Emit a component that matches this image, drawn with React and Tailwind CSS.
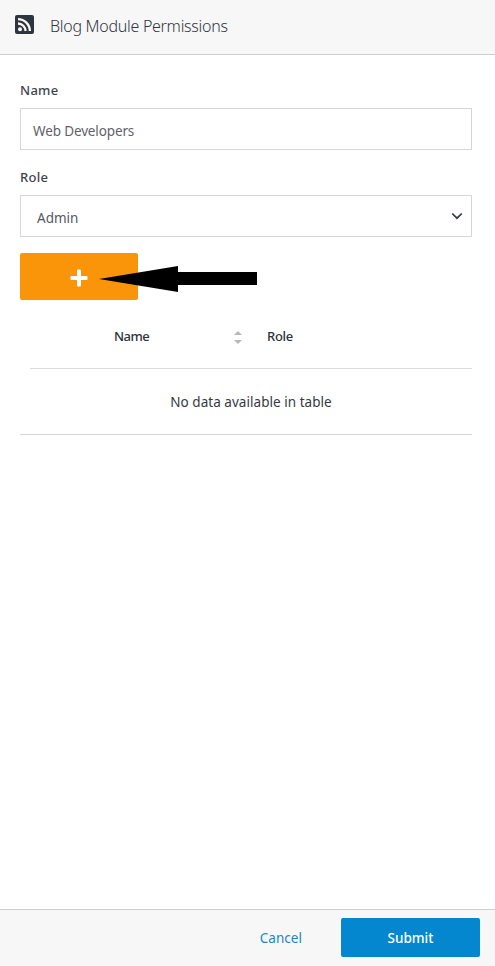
function RssIcon() {
  return (
    <svg className="-mt-1.5 size-[19px]" viewBox="0 0 19 19" fill="none">
      <rect width="19" height="19" rx="2" fill="#2f353f" />
      <circle cx="5" cy="14.2" r="2" fill="#f7f7f7" />
      <path d="M3 8.5a7.5 7.5 0 0 1 7.5 7.5M3 4.1A12 12 0 0 1 14.9 16" stroke="#f7f7f7" strokeWidth="2.3" />
    </svg>
  );
}

function Header() {
  return (
    <header className="flex h-[55px] shrink-0 items-center border-b border-[#cfcfd1] bg-[#f7f7f7] pl-[15px]">
      <RssIcon />
      <h1 className="-mt-0.5 ml-4 text-[16px] font-light tracking-[-0.28px] text-[#32363e]">Blog Module Permissions</h1>
    </header>
  );
}

function Field({ label, children }) {
  return (
    <div className="mb-[17px]">
      <div className="mb-2 h-5 text-[13px] leading-5 font-medium tracking-[0.3px] text-[#3f444d]">{label}</div>
      {children}
    </div>
  );
}

function PermissionTable() {
  return (
    <section className="mt-[18px] border-b border-[#d5d5d5]">
      <div className="ml-2.5 flex h-[51px] border-b border-[#dcdcdc] pl-[84px] text-[13px] leading-[37px] font-medium text-[#2e3238]">
        <span className="w-[120px] tracking-[-0.5px]">Name</span>
        <svg className="mt-3 h-[15px] w-2" viewBox="0 0 8 15" fill="#b8b8b8">
          <path d="M0 5 4 1l4 4zM0 10h8l-4 4z" />
        </svg>
        <span className="ml-[25px] tracking-[-0.3px]">Role</span>
      </div>
      <p className="h-[65px] pl-[10px] text-center text-[13.5px] leading-[66px] tracking-[0.04px] text-[#353940]">No data available in table</p>
    </section>
  );
}

export default function App() {
  return (
    <div className="flex h-[966px] w-[495px] flex-col bg-white font-['Noto_Sans',sans-serif]">
      <Header />
      <main className="flex-1 pt-[25px] pr-[23px] pl-5">
        <Field label="Name">
          <div className="h-[42px] border border-[#d6d6d8] pl-3 text-[13.5px] leading-[44px] tracking-[-0.13px] text-[#5f6369]">Web Developers</div>
        </Field>
        <Field label="Role">
          <div className="flex h-[42px] items-center justify-between border border-[#d6d6d8] pr-2 pl-4 text-[13.5px] text-[#54585f]">
            <span className="mt-[3px] leading-5">Admin</span>
            <svg className="size-3" viewBox="0 0 12 12" fill="none" stroke="#343a40" strokeWidth="1.7">
              <path d="m1.2 3.5 4.8 4.7 4.8-4.7" />
            </svg>
          </div>
        </Field>
        <div className="relative -mt-px h-[47px]">
          <button className="flex h-[47px] w-[118px] items-center justify-center rounded-[2px] bg-[#fa9408]">
            <svg className="mt-[3px] size-[18px]" viewBox="0 0 18 18" fill="white">
              <rect x="7" y="0.5" width="4" height="17" rx="1" />
              <rect x="0.5" y="7" width="17" height="4" rx="1" />
            </svg>
          </button>
          <svg className="absolute top-[13px] left-[79px] h-[26px] w-[158px]" viewBox="0 0 158 26">
            <path d="M0 13 79 0v6h79v13H79v7z" />
          </svg>
        </div>
        <PermissionTable />
      </main>
      <footer className="flex h-[57px] shrink-0 items-start justify-end border-t border-[#cfcfd1] bg-[#f7f7f7] pt-2 pr-[15px] text-[13.5px]">
        <button className="mr-[39px] h-[39px] pt-0.5 tracking-[0.05px] text-[#1b87c6]">Cancel</button>
        <button className="h-[39px] w-[139px] rounded-[2px] bg-[#0587d0] pt-0.5 font-medium text-white">Submit</button>
      </footer>
    </div>
  );
}
